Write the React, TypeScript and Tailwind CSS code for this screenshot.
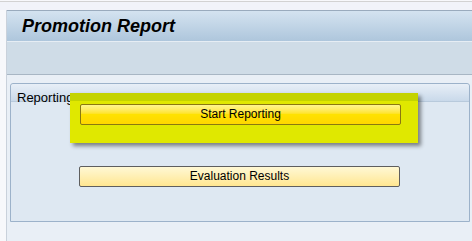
import React from "react";

export default function App() {
  return (
    <div className="w-[472px] h-[241px] bg-[#f7f8fb] font-['Liberation_Sans',Arial,sans-serif] overflow-hidden flex flex-col">
      <div className="h-px mt-px bg-[#d2d2d2]" />
      <div className="h-[8px] bg-[#f1f3f9]" />
      <div className="flex flex-1 min-h-0">
        <div className="w-[6px] bg-[#f7f8fb]" />
        <div className="w-px bg-[#c9d1db]" />
        <div className="flex-1 flex flex-col min-w-0">
          <div className="h-[31px] border-t border-[#9aabbd] bg-linear-to-b from-[#d4e3f0] to-[#aec6dc] pl-[15px] pt-[4px]">
            <span className="text-[18px] leading-[18px] font-bold italic text-black">Promotion Report</span>
          </div>
          <div className="h-px bg-[#e6edf4]" />
          <div className="h-[33px] bg-[#cfdce7] border-b border-[#a8b6c4]" />
          <div className="flex-1 bg-[#e9eff6] pt-[8px] pl-[3px] pr-[2px]">
            <div className="relative h-[139px] border border-[#9cb2ca] rounded-t-[3px] bg-[#dee8f2]">
              <div className="h-[18px] border-b border-[#b8cadc] bg-linear-to-b from-[#e8eff7] to-[#c9d9ea] pl-[6px] pt-px rounded-t-[3px]">
                <span className="text-[13px] leading-[13px] text-black">Reporting</span>
              </div>
              <div className="absolute left-[59px] top-[9px] w-[348px] h-[50px] bg-[#e0e800] shadow-[3px_3px_4px_rgba(0,0,0,0.45)]">
                <div className="h-[8px] bg-[#c4d300]" />
              </div>
              <div className="relative ml-[69px] mt-[2px] w-[321px] h-[21px] border border-[#8a7810] rounded-[2px] bg-linear-to-b from-[#fff58c] via-[#ffe200] to-[#ffd600] flex items-center justify-center">
                <span className="text-[12px] leading-[19px] text-black">Start Reporting</span>
              </div>
              <div className="relative ml-[68px] mt-[41px] w-[321px] h-[21px] border border-[#5e5e5e] rounded-[2px] bg-linear-to-b from-[#fff8d4] to-[#ffe690] flex items-center justify-center">
                <span className="text-[12px] leading-[19px] text-black">Evaluation Results</span>
              </div>
            </div>
          </div>
        </div>
      </div>
    </div>
  );
}
